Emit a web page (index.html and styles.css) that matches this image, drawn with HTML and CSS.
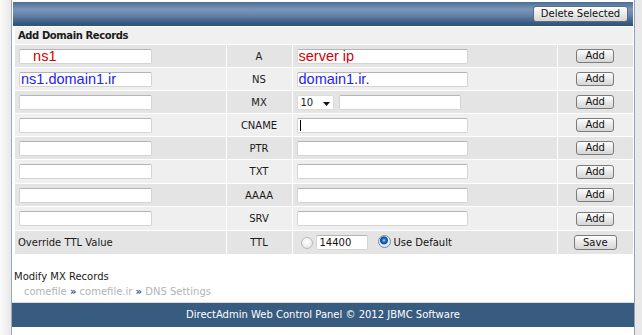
FILE: index.html
```html
<!DOCTYPE html>
<html lang="en">
<head>
    <meta charset="UTF-8">
    <meta name="viewport" content="width=device-width, initial-scale=1.0">
    <title>DNS Settings - DirectAdmin</title>
    <link rel="stylesheet" href="styles.css">
</head>
<body>
    <div class="frame">
        <!-- Bar atas dengan tombol hapus -->
        <div class="topbar">
            <button class="btn btn-delete">Delete Selected</button>
        </div>

        <!-- Tabel tambah record -->
        <table class="records">
            <colgroup>
                <col class="c-name">
                <col class="c-type">
                <col class="c-value">
                <col class="c-act">
            </colgroup>
            <thead>
                <tr><th colspan="4">Add Domain Records</th></tr>
            </thead>
            <tbody>
                <tr class="odd">
                    <td class="col-name"><input class="txt red" type="text" value="   ns1"></td>
                    <td class="col-type">A</td>
                    <td class="col-value"><input class="txt txt-wide red" type="text" value="server ip"></td>
                    <td class="col-act"><button class="btn">Add</button></td>
                </tr>
                <tr>
                    <td class="col-name"><input class="txt blue" type="text" value="ns1.domain1.ir"></td>
                    <td class="col-type">NS</td>
                    <td class="col-value"><input class="txt txt-wide blue" type="text" value="domain1.ir."></td>
                    <td class="col-act"><button class="btn">Add</button></td>
                </tr>
                <tr class="odd">
                    <td class="col-name"><input class="txt" type="text"></td>
                    <td class="col-type">MX</td>
                    <td class="col-value">
                        <div class="mx-box">
                            <span class="sel">10
                                <svg width="7" height="4" viewBox="0 0 7 4"><path d="M0 0h7L3.5 4z" fill="#111"/></svg>
                            </span>
                            <input class="txt txt-mx" type="text">
                        </div>
                    </td>
                    <td class="col-act"><button class="btn">Add</button></td>
                </tr>
                <tr>
                    <td class="col-name"><input class="txt" type="text"></td>
                    <td class="col-type">CNAME</td>
                    <td class="col-value"><span class="txt txt-wide caret"></span></td>
                    <td class="col-act"><button class="btn">Add</button></td>
                </tr>
                <tr class="odd">
                    <td class="col-name"><input class="txt" type="text"></td>
                    <td class="col-type">PTR</td>
                    <td class="col-value"><input class="txt txt-wide" type="text"></td>
                    <td class="col-act"><button class="btn">Add</button></td>
                </tr>
                <tr class="tall">
                    <td class="col-name"><input class="txt" type="text"></td>
                    <td class="col-type">TXT</td>
                    <td class="col-value"><input class="txt txt-wide" type="text"></td>
                    <td class="col-act"><button class="btn">Add</button></td>
                </tr>
                <tr class="odd">
                    <td class="col-name"><input class="txt" type="text"></td>
                    <td class="col-type">AAAA</td>
                    <td class="col-value"><input class="txt txt-wide" type="text"></td>
                    <td class="col-act"><button class="btn">Add</button></td>
                </tr>
                <tr class="tall">
                    <td class="col-name"><input class="txt" type="text"></td>
                    <td class="col-type">SRV</td>
                    <td class="col-value"><input class="txt txt-wide" type="text"></td>
                    <td class="col-act"><button class="btn">Add</button></td>
                </tr>
                <tr class="odd tall">
                    <td class="col-name label">Override TTL Value</td>
                    <td class="col-type">TTL</td>
                    <td class="col-value">
                        <div class="ttl-box">
                            <span class="radio"></span>
                            <input class="txt txt-ttl" type="text" value="14400">
                            <span class="radio radio-on"></span>
                            <span class="use">Use Default</span>
                        </div>
                    </td>
                    <td class="col-act"><button class="btn btn-save">Save</button></td>
                </tr>
            </tbody>
        </table>

        <!-- Link bawah -->
        <div class="links">
            <div class="modify">Modify MX Records</div>
            <div class="crumbs">comefile <b>&raquo;</b> comefile.ir <b>&raquo;</b> DNS Settings</div>
        </div>

        <footer>DirectAdmin Web Control Panel &copy; 2012 JBMC Software</footer>
    </div>
</body>
</html>
```

FILE: styles.css
```css
/* Gaya umum halaman */
body {
    margin: 0;
    height: 335px;
    overflow: hidden;
    font-family: "DejaVu Sans", Verdana, sans-serif;
    font-size: 10px;
    color: #1a1a1a;
    background: linear-gradient(to right, #fbfbfb 0, #e9e9e9 10px, #e9e9e9 100%);
}

/* Bingkai utama */
.frame {
    margin-left: 11px;
    width: 620px;
    height: 335px;
    padding: 2px 1px 0 1px;
    background: #fff;
    border-left: 1px solid #9aabbf;
    border-right: 1px solid #8fa2b8;
}

/* Bar biru di atas */
.topbar {
    height: 24px;
    display: flex;
    align-items: center;
    justify-content: flex-end;
    padding-right: 5px;
    background: linear-gradient(#4d6e94 0%, #7896b9 30%, #6584a9 55%, #3a5d83 85%, #2e5177 100%);
}

/* Tombol abu-abu */
.btn {
    font-family: "DejaVu Sans", Verdana, sans-serif;
    font-size: 10px;
    color: #111;
    height: 14px;
    width: 38px;
    padding: 0;
    line-height: 12px;
    border: 1px solid #7b7b7b;
    border-radius: 3px;
    background: linear-gradient(#ffffff, #e9e9e9 50%, #d6d6d6);
    vertical-align: middle;
}

.btn-delete {
    width: 95px;
    height: 16px;
    line-height: 14px;
    border-color: #5e6c7c;
}

.btn-save {
    width: 43px;
    height: 15px;
}

/* Tabel record */
.records {
    margin: 1px 0 0 2px;
    width: 618px;
    border-collapse: collapse;
    table-layout: fixed;
}

.c-name { width: 211px; }
.c-type { width: 66px; }
.c-value { width: 265px; }
.c-act { width: 76px; }

.records th {
    height: 17px;
    padding: 0 0 0 3px;
    text-align: left;
    font-weight: bold;
    font-size: 10px;
    letter-spacing: -0.4px;
    background: #f0f0f0;
    border-bottom: 1px solid #fff;
}

.records td {
    height: 22px;
    padding: 0;
    background: #efefef;
    border-bottom: 1px solid #fff;
    vertical-align: middle;
}

.records tr.odd td {
    background: #e4e4e4;
}

.records tr.tall td {
    height: 23px;
}

.records td.col-name {
    padding-left: 4px;
}

.col-type {
    text-align: center;
    border-left: 1px solid #fff;
}

.records td.col-value {
    padding-left: 4px;
    border-left: 1px solid #fff;
}

.col-act {
    text-align: center;
    border-left: 1px solid #fff;
}

.records td.label {
    padding-left: 3px;
}

/* Kotak input */
.txt {
    box-sizing: border-box;
    display: inline-block;
    vertical-align: middle;
    width: 133px;
    height: 15px;
    margin: 0;
    padding: 0 1px;
    font-family: "Liberation Sans", Arial, sans-serif;
    font-size: 14.5px;
    line-height: 13px;
    color: #111;
    background: #fff;
    border: 1px solid #d4d4d4;
    border-top-color: #b4b4b4;
    border-radius: 2px;
    outline: none;
}

.txt-wide {
    width: 171px;
}

.mx-box {
    display: flex;
    align-items: center;
}

.txt-mx {
    width: 122px;
    margin-left: 5px;
}

.txt-ttl {
    width: 52px;
    margin: 0 10px 0 3px;
    font-family: "DejaVu Sans", Verdana, sans-serif;
    font-size: 10px;
    padding-left: 3px;
}

.red {
    color: #d40000;
}

.blue {
    color: #2323f0;
}

/* Kursor teks di CNAME */
.caret {
    position: relative;
}

.caret::before {
    content: "";
    position: absolute;
    left: 2px;
    top: 1px;
    width: 1px;
    height: 11px;
    background: #000;
}

/* Dropdown MX */
.sel {
    box-sizing: border-box;
    display: inline-flex;
    align-items: center;
    justify-content: space-between;
    width: 37px;
    height: 15px;
    padding: 0 3px 0 3px;
    background: #fff;
    border: 1px solid #dcdcdc;
    border-radius: 2px;
}

.sel svg {
    margin-top: 4px;
}

/* Radio button */
.ttl-box {
    display: flex;
    align-items: center;
}

.radio {
    box-sizing: border-box;
    display: inline-block;
    width: 12px;
    height: 12px;
    margin-left: 4px;
    border-radius: 50%;
    border: 1px solid #b9b9b9;
    background: radial-gradient(circle at 50% 40%, #ffffff 0, #f1f1f1 50%, #d9d9d9 100%);
}

.radio-on {
    width: 13px;
    height: 13px;
    margin-left: 0;
    margin-top: -2px;
    border-color: #6c8db3;
    background: radial-gradient(circle at 45% 40%, #9fd0ff 0, #1d6cc0 2px, #0d4a8f 3.5px, #e8f0f8 4.5px, #cfdbe7 100%);
}

.use {
    padding-left: 3px;
    color: #111;
    white-space: nowrap;
}

/* Link di bawah tabel */
.links {
    height: 47px;
    padding: 15px 0 0 1px;
    box-sizing: border-box;
}

.modify {
    line-height: 13px;
}

.crumbs {
    margin-top: 2px;
    padding-left: 10px;
    line-height: 13px;
    color: #b3b3b3;
}

.crumbs b {
    color: #2e5483;
}

/* Footer biru */
footer {
    height: 24px;
    line-height: 24px;
    margin-left: -1px;
    margin-right: -1px;
    border-top: 1px solid #dcdcdc;
    text-align: center;
    color: #fff;
    background: #385b80;
}
```
